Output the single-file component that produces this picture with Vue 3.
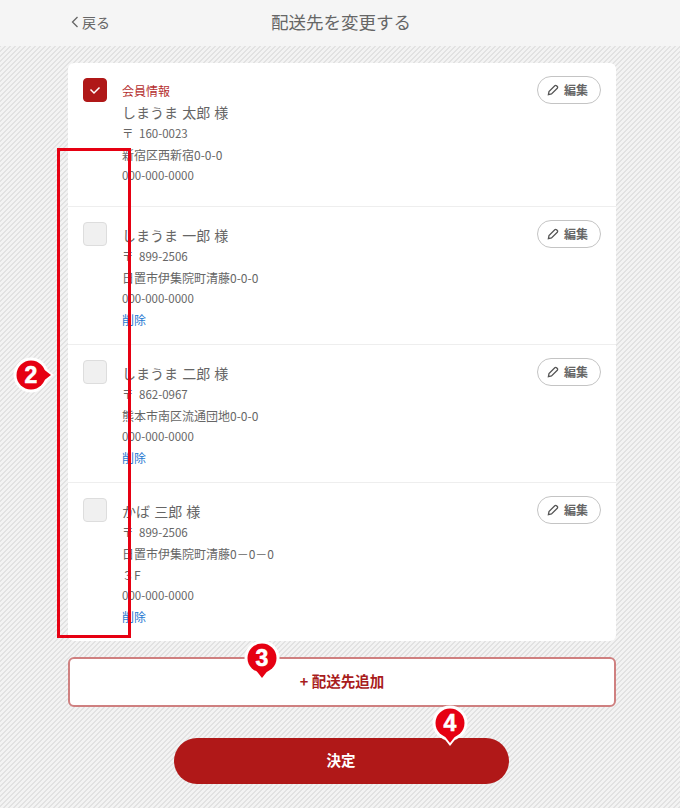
<script setup>
const addresses = [
  { id: 1, member: true, checked: true, name: 'しまうま 太郎 様', zip: '〒 160-0023', addr: ['新宿区西新宿0-0-0'], tel: '000-000-0000' },
  { id: 2, name: 'しまうま 一郎 様', zip: '〒 899-2506', addr: ['日置市伊集院町清藤0-0-0'], tel: '000-000-0000', removable: true },
  { id: 3, name: 'しまうま 二郎 様', zip: '〒 862-0967', addr: ['熊本市南区流通団地0-0-0'], tel: '000-000-0000', removable: true },
  { id: 4, name: 'かば 三郎 様', zip: '〒 899-2506', addr: ['日置市伊集院町清藤0－0－0', '３F'], tel: '000-000-0000', removable: true },
]
const pins = [
  { n: 3, cls: 'pin3' },
  { n: 4, cls: 'pin4' },
]
</script>

<template>
  <div class="page">
    <header class="top">
      <a class="back">
        <svg class="chev" width="8" height="12" viewBox="0 0 8 12"><path d="M6.500 1 1.500 6l5 5" fill="none" stroke="#666" stroke-width="1.300" /></svg>
        <span>戻る</span>
      </a>
      <h1 class="title">配送先を変更する</h1>
    </header>

    <main class="main">
      <section class="card">
        <article v-for="a in addresses" :key="a.id" class="item" :class="{ member: a.member }">
          <span class="check" :class="{ on: a.checked }">
            <svg v-if="a.checked" width="14" height="10" viewBox="0 0 14 10"><path d="M2.500 4.500 6 8l5.500-5.500" fill="none" stroke="#fff" stroke-width="1.500" /></svg>
          </span>
          <div class="info">
            <div v-if="a.member" class="badge">会員情報</div>
            <div class="name">{{ a.name }}</div>
            <div class="zip">{{ a.zip }}</div>
            <div v-for="l in a.addr" :key="l" class="addr">{{ l }}</div>
            <div class="tel">{{ a.tel }}</div>
            <a v-if="a.removable" class="del">削除</a>
          </div>
          <button class="edit">
            <svg width="12" height="12" viewBox="0 0 12 12"><path d="M1.400 10.600 2 7.500 7.800 1.700a1.200 1.200 0 0 1 1.700 0l.8.800a1.200 1.200 0 0 1 0 1.700L4.500 10Z" fill="none" stroke="#555" stroke-width="1.300" /></svg>
            <span>編集</span>
          </button>
        </article>
      </section>

      <button class="add"><span>+ 配送先追加</span></button>
      <button class="ok"><span>決定</span></button>
    </main>

    <div class="frame"></div>

    <svg class="pin pin2" width="44" height="36" viewBox="0 0 44 36">
      <circle cx="18" cy="18" r="17.500" fill="#fff" />
      <path d="M31 10 41 18 31 26Z" fill="#fff" />
      <circle cx="18" cy="18" r="14.500" fill="#e60012" />
      <path d="M29 11 38 18 29 25Z" fill="#e60012" />
      <text x="18" y="26" class="pin-t">2</text>
    </svg>
    <svg v-for="p in pins" :key="p.n" class="pin" :class="p.cls" width="36" height="44" viewBox="0 0 36 44">
      <circle cx="18" cy="18" r="17.500" fill="#fff" />
      <path d="M10 31 18 41 26 31Z" fill="#fff" />
      <circle cx="18" cy="18" r="14.500" fill="#e60012" />
      <path d="M11 29 18 38 25 29Z" fill="#e60012" />
      <text x="18" y="26" class="pin-t">{{ p.n }}</text>
    </svg>
  </div>
</template>

<style scoped>
.page {
  position: relative;
  width: 680px;
  height: 808px;
  overflow: hidden;
  font-family: "Noto Sans CJK JP", "Noto Sans", sans-serif;
  color: #666;
  background: repeating-linear-gradient(135deg, #e2e2e2 0, #e2e2e2 1.768px, #f3f3f3 1.768px, #f3f3f3 3.536px);
}
.top {
  position: relative;
  height: 46px;
  background: #f5f5f5;
  display: flex;
  align-items: center;
  justify-content: center;
  padding-bottom: 3px;
  box-sizing: border-box;
}
.back {
  position: absolute;
  left: 71px;
  top: 13px;
  display: flex;
  align-items: center;
  gap: 3px;
  font-size: 14px;
  line-height: 18px;
}
.title {
  margin: 0 0 0 2px;
  font-size: 17.500px;
  font-weight: 400;
  line-height: 24px;
  color: #666;
}
.main {
  display: flex;
  flex-direction: column;
  align-items: center;
  padding: 17px 64px 0 68px;
}
.card {
  width: 548px;
  background: #fff;
  border-radius: 6px;
  overflow: hidden;
}
.item {
  display: flex;
  padding: 17.500px 15px 14px;
  border-top: 1px solid #eee;
  box-sizing: border-box;
}
.item.member {
  padding: 16.500px 15px 20px;
  border-top: 0;
}
.check {
  flex: none;
  width: 24px;
  height: 24px;
  margin-top: -2.500px;
  box-sizing: border-box;
  border: 1px solid #ddd;
  border-radius: 4px;
  background: #f0f0f0;
  display: flex;
  align-items: center;
  justify-content: center;
}
.member .check {
  margin-top: -1.500px;
}
.check.on {
  background: #b01818;
  border-color: #b01818;
}
.info {
  flex: 1;
  margin-left: 15px;
  font-size: 11.500px;
  line-height: 21px;
}
.badge {
  color: #b5302f;
  font-size: 12px;
  line-height: 22px;
}
.name {
  font-size: 14px;
  line-height: 21.500px;
  word-spacing: 1px;
}
.zip {
  word-spacing: 3px;
}
.addr {
  font-size: 12px;
}
.del {
  display: block;
  color: #1f78d1;
  font-size: 12px;
}
.edit {
  flex: none;
  width: 64px;
  height: 28px;
  margin-top: -4.500px;
  padding: 0 3px 2px 0;
  box-sizing: border-box;
  border: 1.500px solid #c4c4c4;
  border-radius: 14px;
  background: #fff;
  color: #666;
  font-family: inherit;
  font-size: 12px;
  font-weight: 700;
  display: flex;
  align-items: center;
  justify-content: center;
  gap: 5px;
}
.edit svg {
  margin-top: 2px;
}
.member .edit {
  margin-top: -3.500px;
}
.add {
  width: 548px;
  height: 50px;
  margin-top: 16px;
  padding: 0 0 3px;
  box-sizing: border-box;
  border: 2px solid #cf8080;
  border-radius: 6px;
  background: #fff;
  color: #a81c1c;
  font-family: inherit;
  font-size: 14.500px;
  font-weight: 700;
}
.ok {
  width: 335px;
  height: 46px;
  margin: 31px 2px 0 0;
  padding: 0 0 3px;
  border: 0;
  border-radius: 23px;
  background: #b01818;
  color: #fff;
  font-family: inherit;
  font-size: 14.500px;
  font-weight: 700;
}
.frame {
  position: absolute;
  left: 57px;
  top: 148px;
  width: 74px;
  height: 490px;
  box-sizing: border-box;
  border: 3px solid #e60012;
}
.pin {
  position: absolute;
}
.pin-t {
  fill: #fff;
  stroke: #fff;
  stroke-width: 0.600px;
  font-family: "Liberation Sans", sans-serif;
  font-size: 23px;
  font-weight: 700;
  text-anchor: middle;
}
.pin2 { left: 13px; top: 357px; }
.pin3 { left: 244px; top: 640px; }
.pin4 { left: 432px; top: 705px; }
</style>
